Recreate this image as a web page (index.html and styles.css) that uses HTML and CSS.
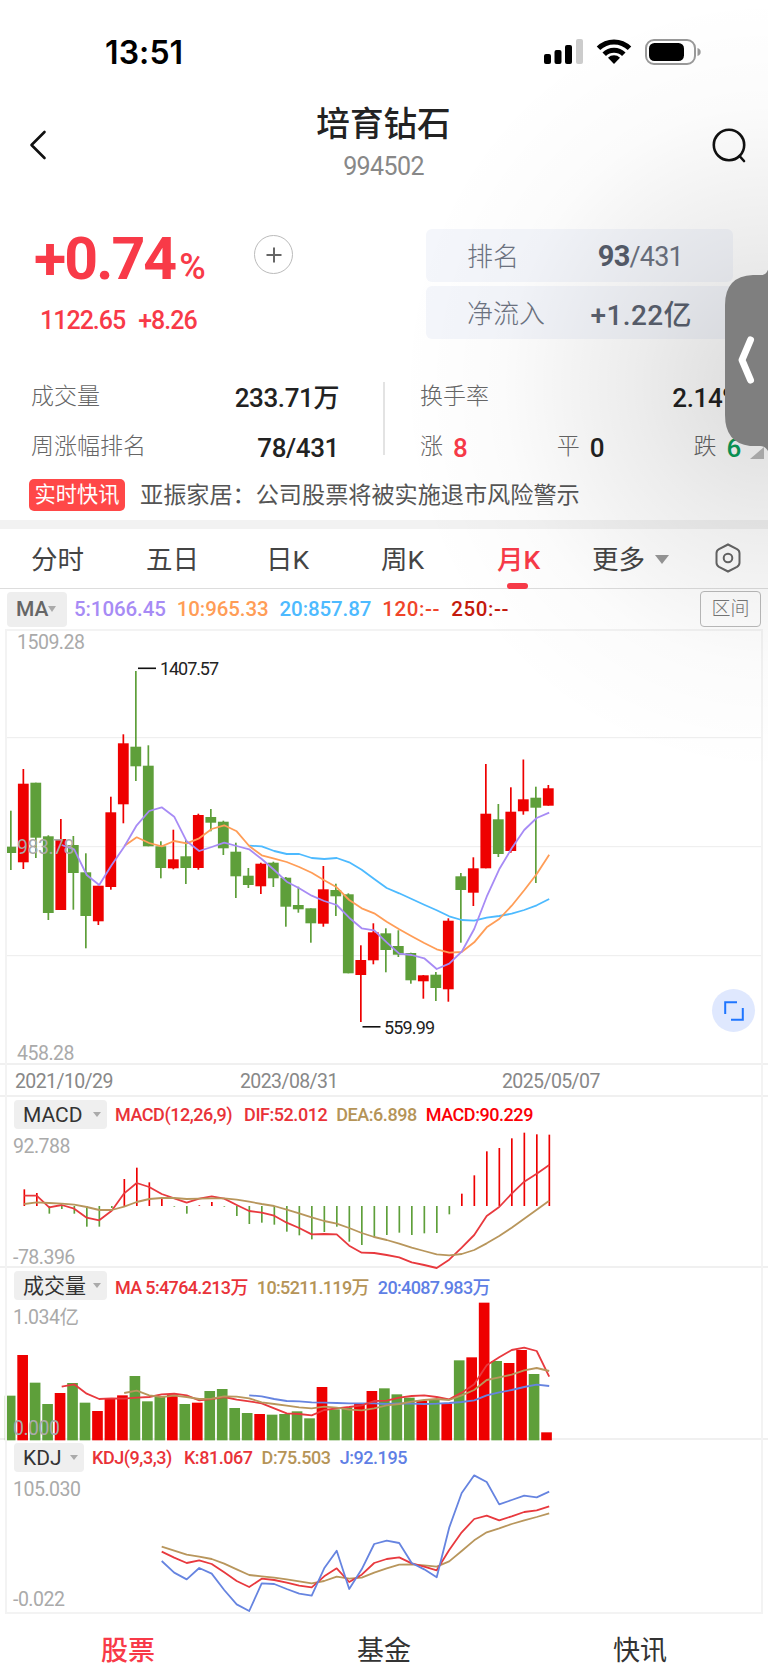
FILE: index.html
```html
<!DOCTYPE html>
<html lang="zh-CN">
<head>
  <meta charset="UTF-8">
  <meta name="viewport" content="width=device-width, initial-scale=1.0">
  <title>培育钻石 994502</title>
  <link rel="stylesheet" href="styles.css">
</head>
<body>
  <div class="page">
    <div class="status-bar">
      <span class="clock">13:51</span>
      <div class="status-icons">
        <svg width="39" height="26" viewBox="0 0 39 26">
          <rect x="0" y="15" width="7" height="10" rx="2"/>
          <rect x="10.5" y="11" width="7" height="14" rx="2"/>
          <rect x="21" y="6" width="7" height="19" rx="2"/>
          <rect x="32" y="0" width="7" height="25" rx="2" fill="#ccc"/>
        </svg>
        <svg width="36" height="26" viewBox="0 0 36 26">
          <g fill="none" stroke="#000" stroke-width="5">
            <path d="M2.5 9.3a22 22 0 0 1 31 0"/>
            <path d="M8.2 15.2a14 14 0 0 1 19.6 0"/>
          </g>
          <path d="M18 25l-6-6.2a8.6 8.6 0 0 1 12 0z"/>
        </svg>
        <svg width="56" height="26" viewBox="0 0 56 26">
          <rect x="1" y="1" width="49" height="24" rx="8" fill="none" stroke="#999" stroke-width="2"/>
          <rect x="4" y="4" width="35" height="18" rx="5.5"/>
          <path d="M52.5 9v8c2.6-.8 3.2-2.3 3.2-4s-.6-3.2-3.2-4z" fill="#999"/>
        </svg>
      </div>
    </div>

    <div class="nav-bar">
      <svg class="back" width="18" height="30" viewBox="0 0 18 30"><path d="M15.5 2L2.5 15l13 13"/></svg>
      <div class="nav-title">
        <h1>培育钻石</h1>
        <span class="code">994502</span>
      </div>
      <svg class="search" width="34" height="36" viewBox="0 0 34 36"><circle cx="17" cy="17" r="15.2"/><path d="M27.5 28l4.5 5"/></svg>
    </div>

    <div class="quote">
      <div class="quote-left">
        <div class="change"><b>+0.74</b><span>%</span></div>
        <div class="price"><span>1122.65</span><span>+8.26</span></div>
      </div>
      <div class="add"><svg width="16" height="16" viewBox="0 0 16 16"><path d="M8 .5v15M.5 8h15"/></svg></div>
      <div class="ranks">
        <div class="rank"><span class="rank-label">排名</span><span class="rank-value"><b>93</b>/431</span></div>
        <div class="rank"><span class="rank-label">净流入</span><span class="rank-value inflow">+1.22亿</span></div>
      </div>
    </div>

    <div class="stats">
      <div class="stats-col left">
        <div class="stat"><label>成交量</label><span>233.71万</span></div>
        <div class="stat"><label>周涨幅排名</label><span>78/431</span></div>
      </div>
      <div class="stats-col right">
        <div class="stat"><label>换手率</label><span>2.14%</span></div>
        <div class="stat counts">
          <div><label>涨</label><span class="up">8</span></div>
          <div><label>平</label><span>0</span></div>
          <div><label>跌</label><span class="down">6</span></div>
        </div>
        <i class="corner"></i>
      </div>
    </div>

    <div class="news">
      <span class="news-tag">实时快讯</span>
      <span class="news-text">亚振家居：公司股票将被实施退市风险警示</span>
    </div>

    <div class="tabs">
      <span>分时</span>
      <span>五日</span>
      <span>日K</span>
      <span>周K</span>
      <span class="active">月K</span>
      <span class="more">更多<i class="caret"></i></span>
      <svg width="28" height="30" viewBox="0 0 28 30"><path d="M14 1.5l9 4.7q2.5 1.4 2.5 4v9.6q0 2.6-2.5 4l-9 4.7-9-4.7q-2.5-1.4-2.5-4v-9.6q0-2.6 2.5-4z"/><circle cx="14" cy="15" r="4.3"/></svg>
    </div>

    <div class="ma-row">
      <span class="ma-button">MA<i class="caret"></i></span>
      <span class="c-purple">5:1066.45</span>
      <span class="c-orange">10:965.33</span>
      <span class="c-sky">20:857.87</span>
      <span class="c-tomato empty">120:--</span>
      <span class="c-brick empty">250:--</span>
      <span class="range">区间</span>
    </div>

    <div class="charts">
      <div class="panel kline">
        <svg id="kline" viewBox="0 629 768 436" preserveAspectRatio="none"></svg>
        <span class="axis top">1509.28</span>
        <span class="axis middle">983.78</span>
        <span class="axis bottom">458.28</span>
        <span class="expand"><svg width="20" height="20" viewBox="0 0 20 20"><path d="M13 1.2H1.2V13M18.8 7v11.8H7"/></svg></span>
      </div>
      <div class="dates">
        <span>2021/10/29</span>
        <span>2023/08/31</span>
        <span>2025/05/07</span>
      </div>

      <div class="panel macd">
        <svg id="macd" viewBox="0 21 2304 513" preserveAspectRatio="none"></svg>
        <div class="legend">
          <span class="pick">MACD<i class="caret"></i></span>
          <span class="c-red params">MACD(12,26,9)</span>
          <span class="c-red">DIF:52.012</span>
          <span class="c-tan">DEA:6.898</span>
          <span class="c-bright">MACD:90.229</span>
        </div>
        <span class="axis top">92.788</span>
        <span class="axis bottom">-78.396</span>
      </div>

      <div class="panel volume">
        <svg id="volume" viewBox="0 -6 2304 516" preserveAspectRatio="none"></svg>
        <div class="legend">
          <span class="pick">成交量<i class="caret"></i></span>
          <span class="c-red">MA 5:4764.213万</span>
          <span class="c-tan">10:5211.119万</span>
          <span class="c-blue">20:4087.983万</span>
        </div>
        <span class="axis top">1.034亿</span>
        <span class="axis bottom">0.000</span>
      </div>

      <div class="panel kdj">
        <svg id="kdj" viewBox="0 30 2304 519" preserveAspectRatio="none"></svg>
        <div class="legend">
          <span class="pick">KDJ<i class="caret"></i></span>
          <span class="c-red params">KDJ(9,3,3)</span>
          <span class="c-red">K:81.067</span>
          <span class="c-tan">D:75.503</span>
          <span class="c-blue">J:92.195</span>
        </div>
        <span class="axis top">105.030</span>
        <span class="axis bottom">-0.022</span>
      </div>
    </div>

    <div class="bottom-nav">
      <span class="active">股票</span>
      <span>基金</span>
      <span>快讯</span>
    </div>

    <div class="haze"></div>
    <svg class="drawer" width="44" height="192" viewBox="0 0 44 192">
      <path class="drawer-body" d="M44 0q-1 10-8 10h-8Q0 11 0 40v110q0 28 25 31h10q6 0 9 7z"/>
      <path class="drawer-arrow" d="M25.5 75L17 95l8.5 20"/>
    </svg>
  </div>
  <script src="charts.js"></script>
</body>
</html>
```
FILE: styles.css
```css
* {
  box-sizing: border-box;
}
body {
  margin: 0;
  background: #fff;
  font-family: Roboto, "Noto Sans CJK SC", sans-serif;
  color: #333;
}
.page {
  position: relative;
  width: 768px;
  height: 1665px;
  overflow: hidden;
  white-space: nowrap;
}
.status-bar {
  height: 94px;
  padding: 10px 67px 0 105px;
  display: flex;
  align-items: center;
  justify-content: space-between;
}
.clock {
  font-family: Inter, sans-serif;
  font-size: 32px;
  font-weight: 600;
  letter-spacing: 0.1px;
  color: #000;
}
.status-icons {
  display: flex;
  gap: 13px;
}
.nav-bar {
  height: 116px;
  padding: 5px 22px 0 29px;
  display: flex;
  justify-content: space-between;
  align-items: flex-start;
}
.nav-bar svg {
  fill: none;
  stroke: #111;
  stroke-width: 2.6;
  stroke-linecap: round;
  stroke-linejoin: round;
}
.back {
  margin: 31px 8px 0 0;
}
.search {
  margin-top: 29px;
}
.nav-title {
  display: flex;
  flex-direction: column;
  align-items: center;
}
h1 {
  margin: 0;
  font-size: 33.6px;
  line-height: 51px;
  font-weight: 500;
  color: #222;
}
.code {
  font-size: 25px;
  line-height: 34px;
  letter-spacing: -0.6px;
  color: #888;
}
.quote {
  height: 160px;
  padding: 19px 35px 0 34px;
  display: flex;
  align-items: flex-start;
}
.quote-left {
  width: 220px;
  color: #f83a48;
}
.change {
  height: 58px;
  line-height: 59px;
  letter-spacing: -1.9px;
}
.change b {
  font-size: 59px;
}
.change span {
  font-size: 36px;
  font-weight: 500;
  margin-left: 4px;
}
.price {
  display: flex;
  gap: 13px;
  padding: 19px 0 0 6px;
  font-size: 25px;
  line-height: 30px;
  letter-spacing: -1px;
  font-weight: 500;
}
.add {
  width: 39px;
  height: 39px;
  margin-top: 6px;
  border: 1.5px solid #bbb;
  border-radius: 50%;
  display: flex;
  align-items: center;
  justify-content: center;
}
.add svg {
  stroke: #666;
  stroke-width: 2;
}
.ranks {
  margin-left: auto;
  display: flex;
  flex-direction: column;
  gap: 4px;
}
.rank {
  width: 307px;
  height: 53px;
  padding: 0 41px;
  border-radius: 6px;
  background: #f4f6fb;
  display: flex;
  align-items: center;
  color: #6c7280;
}
.rank-label {
  font-size: 26px;
  font-weight: 300;
  margin-bottom: 2px;
}
.rank-value {
  margin-left: auto;
  margin-right: 9px;
  font-size: 27px;
  letter-spacing: -0.8px;
}
.rank-value b {
  font-size: 29px;
  color: #565d6b;
}
.rank-value.inflow {
  margin-right: 0;
  font-size: 28px;
  font-weight: 500;
  letter-spacing: 0.4px;
  color: #5b6270;
}
.stats {
  height: 102px;
  padding: 1px 27px 0 31px;
  display: flex;
}
.stats-col {
  display: flex;
  flex-direction: column;
}
.stats-col.left {
  width: 308px;
  padding-top: 2px;
}
.stats-col.right {
  position: relative;
  flex: 1;
  margin: 11px 0 17px 44px;
  padding-left: 35px;
  border-left: 2px solid #e3e3e3;
}
.stats-col.right .stat:first-child {
  margin-top: -9px;
}
.stat {
  flex: 0 0 50px;
  display: flex;
  align-items: center;
  justify-content: space-between;
}
.stat label {
  font-size: 23px;
  font-weight: 300;
  line-height: 30px;
  margin-bottom: 3px;
  color: #666;
}
.stat span {
  font-size: 26px;
  font-weight: 500;
  line-height: 30px;
  letter-spacing: -0.4px;
  color: #222;
}
.stat .up {
  color: #f83a48;
}
.stat .down {
  color: #0a9f5a;
}
.counts div {
  display: flex;
  align-items: center;
  gap: 10px;
}
.corner {
  position: absolute;
  right: -23px;
  bottom: -4px;
  border-left: 14px solid transparent;
  border-bottom: 12px solid #bbb;
}
.news {
  height: 48px;
  padding: 7px 0 0 29px;
  display: flex;
  align-items: flex-start;
  gap: 15px;
}
.news-tag {
  width: 96px;
  height: 32px;
  border-radius: 5px;
  background: #ff4848;
  color: #fff;
  font-size: 21.2px;
  line-height: 32px;
  text-align: center;
}
.news-text {
  font-size: 23.15px;
  line-height: 34px;
  color: #555;
}
.caret {
  display: inline-block;
  border: 5px solid transparent;
  border-top: 6px solid #aaa;
  border-bottom: 0;
}
.tabs {
  height: 69px;
  padding: 0 26px 3px 31px;
  border-top: 9px solid #f2f2f2;
  border-bottom: 1px solid #ddd;
  display: grid;
  grid-template-columns: 115px 120px 115px 116px 95px 1fr 28px;
  align-items: center;
  font-size: 26.5px;
  color: #444;
}
.tabs span {
  position: relative;
}
.tabs .active {
  color: #f83a48;
  font-weight: 500;
}
.tabs .active::after {
  content: "";
  position: absolute;
  left: 10px;
  bottom: -12px;
  width: 21px;
  height: 6px;
  border-radius: 3px;
  background: #f83a48;
}
.tabs .caret {
  margin-left: 10px;
  vertical-align: 5px;
  border-width: 9px 7px 0;
  border-top-color: #999;
}
.tabs svg {
  position: relative;
  top: 1px;
  fill: none;
  stroke: #666;
  stroke-width: 2;
}
.ma-row {
  height: 40px;
  padding: 0 7px;
  display: flex;
  align-items: center;
  gap: 11px;
  font-size: 20.5px;
  font-weight: 500;
  letter-spacing: -0.1px;
}
.ma-row .empty {
  letter-spacing: 0.6px;
}
.ma-button {
  width: 60px;
  height: 35px;
  margin-right: -4px;
  border-radius: 4px;
  background: #eee;
  color: #666;
  font-size: 21px;
  line-height: 35px;
  padding-left: 9px;
}
.ma-button .caret {
  vertical-align: 4px;
  border-width: 6px 4.5px 0;
}
.range {
  width: 61px;
  height: 36px;
  margin-left: auto;
  border: 1.5px solid #bbb;
  border-radius: 4px;
  font-size: 19px;
  font-weight: 300;
  line-height: 34px;
  text-align: center;
  color: #777;
}
.c-purple { color: #a78bf5; }
.c-orange { color: #ff9d57; }
.c-sky { color: #4dbaff; }
.c-tomato { color: #f0452a; }
.c-brick { color: #c41a0c; }
.c-red { color: #e93238; }
.c-tan { color: #b59457; }
.c-blue { color: #5f7fe5; }
.c-bright { color: #fb0007; }
.charts {
  position: relative;
  height: 985px;
}
.charts::after {
  content: "";
  position: absolute;
  inset: 0 5px 0 5px;
  border: 2px solid #f3f3f3;
}
.panel {
  position: relative;
  border-bottom: 2px solid #f0f0f0;
}
.panel > svg {
  position: absolute;
  left: 0;
  top: 0;
  width: 768px;
  height: calc(100% + 2px);
  overflow: visible;
}
.kline {
  height: 436px;
}
.dates {
  height: 32px;
  padding-left: 15px;
  border-bottom: 2px solid #f0f0f0;
  display: grid;
  grid-template-columns: 225px 262px 1fr;
  align-items: center;
  font-size: 19.5px;
  letter-spacing: -0.6px;
  line-height: 34px;
  color: #888;
}
.macd {
  height: 171px;
}
.volume {
  height: 172px;
}
.kdj {
  height: 173px;
  border: 0;
}
.kdj > svg {
  height: 100%;
}
.legend {
  position: relative;
  padding: 3px 0 0 14px;
  display: flex;
  align-items: center;
  font-size: 18px;
  font-weight: 500;
  letter-spacing: -0.45px;
}
.legend span {
  margin-right: 9px;
}
.legend .params {
  margin-right: 12px;
}
.volume .legend {
  letter-spacing: -0.65px;
}
.legend .pick {
  width: 93px;
  height: 29px;
  padding: 0 9px;
  border-radius: 4px;
  background: #efefef;
  color: #333;
  font-size: 21px;
  font-weight: 400;
  line-height: 28px;
  letter-spacing: 0;
  margin-right: 8px;
  display: flex;
  align-items: center;
  justify-content: space-between;
}
.kdj .pick {
  width: 70px;
}
.pick .caret {
  margin-right: -3px;
  border-width: 5px 4px 0;
}
.axis {
  position: absolute;
  left: 13px;
  font-size: 19.5px;
  line-height: 20px;
  letter-spacing: -0.5px;
  color: #aaa;
}
.kline .axis {
  left: 17px;
}
.axis.top {
  top: 40px;
}
.axis.bottom {
  bottom: -2px;
}
.kline .top {
  top: 4px;
}
.kline .middle {
  top: 209px;
}
.kline .bottom {
  bottom: -1px;
}
.volume .bottom {
  bottom: -1px;
}
.kdj .bottom {
  bottom: 3px;
}
.expand {
  position: absolute;
  left: 712px;
  top: 360px;
  width: 43px;
  height: 43px;
  border-radius: 50%;
  background: #dfe8fe;
  display: flex;
  align-items: center;
  justify-content: center;
}
.expand svg {
  fill: none;
  stroke: #1f75ff;
  stroke-width: 2;
}
.bottom-nav {
  height: 51px;
  padding-top: 24px;
  display: flex;
  font-size: 27px;
  line-height: 27px;
  color: #333;
}
.bottom-nav span {
  flex: 1;
  text-align: center;
}
.bottom-nav .active {
  color: #f83a48;
  font-weight: 500;
}
.haze {
  position: absolute;
  inset: 0;
  pointer-events: none;
  background: radial-gradient(ellipse 370px 390px at 768px 385px, rgba(0, 0, 0, 0.14), rgba(0, 0, 0, 0.075) 35%, rgba(0, 0, 0, 0.015) 72%, transparent);
}
.drawer {
  position: absolute;
  left: 725px;
  top: 265px;
}
.drawer-body {
  fill: #7f7f7f;
}
.drawer-arrow {
  fill: none;
  stroke: #fff;
  stroke-width: 7;
  stroke-linecap: round;
  stroke-linejoin: round;
}
.mark {
  font-size: 18px;
  fill: #222;
}
```
FILE: charts.js
```js
const RED = "#ee0000";
const GREEN = "#5e9f3a";

// color, high, body top, body bottom, low
const candles = [
  ["g", 810.7, 846.7, 853, 870], ["r", 769, 783.7, 862.3, 869], ["g", 782.7, 782.7, 837.7, 858],
  ["g", 835.3, 836.3, 913, 920], ["r", 819, 839, 910, 910], ["g", 836, 845, 873, 909.7],
  ["g", 853.3, 872.3, 916, 948.3], ["r", 885.7, 885.7, 921.3, 925], ["r", 796.7, 812.3, 887, 889.7],
  ["r", 734.3, 743.3, 804.3, 823.3], ["g", 671, 746.7, 766.3, 781], ["g", 745.3, 765.7, 846.3, 846.3],
  ["g", 841.3, 846.3, 868, 878.3], ["r", 829.7, 859.3, 868.3, 869.3], ["g", 840, 856.3, 868, 884],
  ["r", 813.7, 815, 868, 869.7], ["g", 809, 817, 822.7, 831.3], ["g", 820.7, 821.7, 848.3, 855],
  ["g", 842.7, 851.7, 876.3, 898], ["g", 868, 875.7, 885, 888], ["r", 862.7, 863.7, 886.3, 894],
  ["g", 861.7, 862.7, 878.3, 887], ["g", 877, 877.7, 906.7, 926.7], ["g", 886.7, 905, 909.3, 912.7],
  ["g", 908.3, 908.3, 923.3, 942.7], ["r", 866, 889.3, 923.7, 926.7], ["g", 883.7, 890, 896.3, 916],
  ["g", 893.3, 894.3, 973.3, 973.3], ["r", 945.3, 960, 975, 1022], ["r", 923.3, 932.3, 960.3, 964.3],
  ["g", 928.3, 933.3, 950, 972.3], ["g", 930.3, 946, 954.7, 957], ["g", 952.7, 953, 980.3, 983.7],
  ["r", 975, 975.3, 981.3, 998.7], ["g", 972, 974.7, 988, 1001], ["r", 918.3, 920.7, 989.3, 1001.7],
  ["g", 873, 876.3, 890, 942.7], ["r", 857.3, 868.3, 892.7, 906], ["r", 764, 813.7, 868.3, 868.3],
  ["g", 804, 819.3, 854, 857], ["r", 787.3, 811.7, 851, 852.7], ["r", 759.5, 799.3, 811.3, 814.7],
  ["g", 786.7, 797.7, 807.7, 883], ["r", 785, 788.3, 805.7, 805.7]
];
const ma5 = [845, 849.3, 875, 885, 865, 846.7, 825.3, 811, 807.3, 816.7, 841.3, 851, 847, 842.7, 846, 849.3, 859, 870, 881.7, 888.3, 895.7, 901, 905, 917.7, 928.3, 930.3, 942.3, 953.7, 955, 958.3, 969, 963.7, 951.7, 929, 896.7, 869.3, 848.3, 830, 818, 812.7];
const ma10 = [846, 837.3, 843, 846.3, 841, 843.3, 838.3, 829, 825.3, 831.3, 846, 855.3, 858.7, 862, 867, 872.7, 880.3, 887.3, 900, 908.3, 913.3, 921.7, 929.3, 936.3, 943, 949.3, 952.7, 952, 942.3, 927.3, 919, 905.7, 890.3, 874, 854.7];
const ma20 = [845.7, 846.3, 851, 854, 854, 858, 859, 858, 862.3, 869.7, 879, 888, 893.3, 899, 904.7, 910.3, 916.3, 920, 920.7, 917.7, 916, 913.7, 910, 905.3, 899];

const macdBars = [298, 309, 371, 357, 371, 410, 410, 354, 267, 233, 277, 323, 350, 371, 346, 336, 350, 378, 402, 398, 404, 425, 436, 448, 426, 410, 455, 465, 443, 435, 428, 435, 430, 429, 373, 311, 256, 184, 174, 145, 128, 133, 134];
const dif = [317, 317, 352, 345, 356, 383, 391, 362, 310, 279, 291, 312, 325, 338, 326, 319, 326, 345, 363, 368, 377, 398, 414, 433, 432, 433, 467, 488, 489, 495, 502, 517, 525, 534, 509, 473, 435, 378, 351, 311, 275, 251, 225];
const dea = [342, 337, 339, 341, 344, 351, 360, 360, 350, 336, 327, 324, 324, 327, 326, 325, 325, 329, 335, 342, 348, 359, 370, 382, 393, 401, 414, 429, 441, 450, 461, 473, 483, 493, 496, 492, 480, 460, 438, 413, 386, 359, 332];

const volumes = [377, 255, 338, 402, 369, 339, 398, 423, 386, 376, 318, 394, 379, 373, 402, 398, 363, 357, 414, 429, 432, 434, 432, 424, 445, 351, 418, 412, 402, 363, 355, 373, 383, 392, 389, 401, 271, 262, 98, 273, 279, 240, 312, 487];
const vol5 = [350, 343, 371, 387, 385, 386, 383, 381, 373, 371, 376, 391, 387, 381, 389, 394, 400, 415, 430, 432, 436, 420, 415, 411, 406, 393, 392, 383, 378, 376, 381, 388, 368, 343, 286, 262, 240, 233, 243, 320];
const vol10 = [369, 362, 376, 381, 377, 381, 387, 386, 379, 380, 385, 397, 402, 407, 412, 415, 410, 413, 419, 421, 415, 406, 402, 395, 390, 387, 390, 376, 360, 330, 322, 314, 301, 294, 303];
const vol20 = [376, 379, 387, 393, 394, 397, 398, 399, 400, 400, 400, 402, 400, 401, 402, 401, 399, 396, 391, 376, 367, 360, 351, 344, 348];

const kLine = [365, 383, 399, 391, 402, 427, 453, 471, 446, 450, 458, 467, 472, 439, 415, 456, 434, 399, 387, 382, 400, 410, 421, 360, 307, 267, 257, 271, 259, 246, 241, 229];
const dLine = [350, 362, 374, 380, 387, 401, 418, 435, 439, 443, 448, 454, 460, 453, 440, 446, 443, 428, 415, 404, 403, 406, 410, 394, 363, 331, 307, 295, 282, 271, 261, 250];
const jLine = [393, 428, 448, 414, 431, 480, 523, 543, 460, 462, 477, 491, 497, 415, 362, 477, 418, 342, 332, 339, 399, 418, 442, 293, 189, 136, 156, 223, 210, 197, 202, 185];

// scale is 1 for the candle chart and 3 for the indicator panels
function line(values, start, color, scale) {
  const points = values.map((y, i) => `${(11.7 + 12.5 * (start + i)) * scale},${y}`).join(" ");
  return `<polyline points="${points}" fill="none" stroke="${color}" stroke-width="${1.8 * scale}" stroke-linejoin="round"/>`;
}

function bar(x, y, width, height, color) {
  return `<rect x="${x}" y="${y}" width="${width}" height="${height}" fill="${color}"/>`;
}

function drawKline() {
  let out = "";
  [737, 846, 955].forEach(y => out += bar(6, y, 756, 1.2, "#efefef"));
  candles.forEach(([c, high, top, bottom, low], i) => {
    const x = 10.8 + 12.5 * i;
    const color = c === "r" ? RED : GREEN;
    out += bar(x - 0.8, high, 1.7, low - high, color);
    out += bar(x - 5.4, top, 10.8, bottom - top, color);
  });
  out += line(ma20, 19, "#4dbaff", 1) + line(ma10, 9, "#ff9d57", 1) + line(ma5, 4, "#a78bf5", 1);
  out += bar(138, 667.5, 18, 1.6, "#111") + `<text class="mark" x="160" y="675" textLength="59">1407.57</text>`;
  out += bar(362.5, 1026, 18, 1.6, "#111") + `<text class="mark" x="384" y="1034" textLength="51">559.99</text>`;
  document.getElementById("kline").innerHTML = out;
}

function drawMacd() {
  let out = "";
  macdBars.forEach((y, i) => {
    const x = 35.5 + 37.5 * (i + 1);
    out += y < 348 ? bar(x - 2.5, y, 5, 348 - y, RED) : bar(x - 2.5, 348, 5, y - 348, GREEN);
  });
  out += line(dif, 1, "#e8393e", 3) + line(dea, 1, "#b8965c", 3);
  document.getElementById("macd").innerHTML = out;
}

function drawVolume() {
  let out = "";
  volumes.forEach((y, i) => {
    out += bar(14.5 + 37.42 * i, y, 32, 511 - y, candles[i][0] === "r" ? RED : GREEN);
  });
  out += line(vol20, 19, "#6684e0", 3) + line(vol5, 4, "#e8393e", 3) + line(vol10, 9, "#b8965c", 3);
  document.getElementById("volume").innerHTML = out;
}

function drawKdj() {
  document.getElementById("kdj").innerHTML =
    line(dLine, 12, "#b8965c", 3) + line(kLine, 12, "#e8393e", 3) + line(jLine, 12, "#6684e0", 3);
}

drawKline();
drawMacd();
drawVolume();
drawKdj();
```
